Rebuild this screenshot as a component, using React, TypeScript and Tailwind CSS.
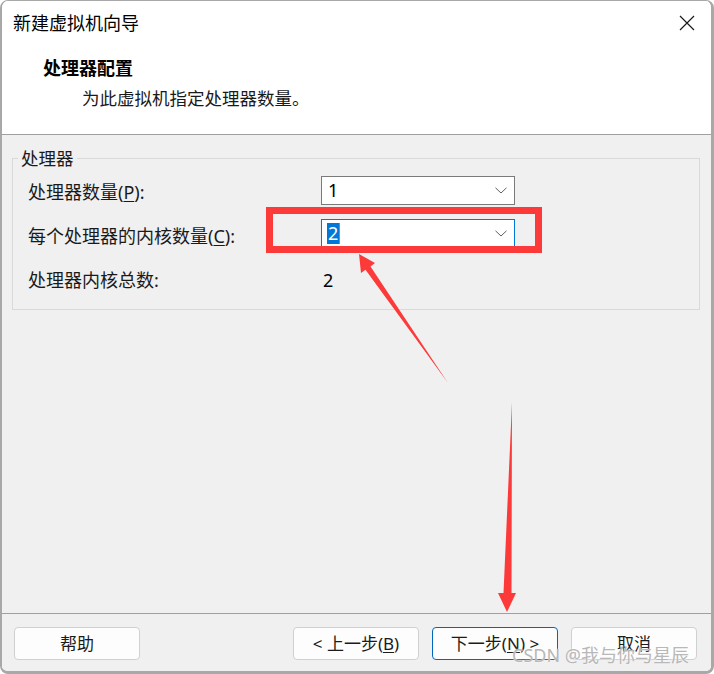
import React from 'react';

const FONT = "font-['Noto_Sans','Noto_Sans_CJK_SC',sans-serif]";

const Chevron = () => (
  <svg width="12" height="7" viewBox="0 0 12 7" className="shrink-0">
    <path d="M0.5 0.8 L6 6 L11.5 0.8" fill="none" stroke="#606060" strokeWidth="1" />
  </svg>
);

const Combo = ({ value, focused }: { value: string; focused?: boolean }) => (
  <div
    className={`h-[29px] w-[194px] bg-white border flex items-center justify-between pl-[5px] pr-[7px] ${
      focused ? 'border-[#0078d7]' : 'border-[#7a7a7a]'
    }`}
  >
    {focused ? (
      <span className="flex items-center">
        <span className="bg-[#0078d7] text-white text-[18px] leading-[21px] px-[1px]">{value}</span>
        <span className="w-[1px] h-[21px] bg-[#d07a2a]" />
      </span>
    ) : (
      <span className="text-[18px] leading-[21px] text-black pl-[1px]">{value}</span>
    )}
    <Chevron />
  </div>
);

const Btn = ({ children, primary }: { children: React.ReactNode; primary?: boolean }) => (
  <button
    className={`w-[126px] h-[33px] rounded-[4px] border bg-[#fdfdfd] text-[17px] leading-[22px] text-[#1b1b1b] flex items-center justify-center ${
      primary ? 'border-[#0067c0]' : 'border-[#d0d0d0]'
    }`}
  >
    {children}
  </button>
);

const App: React.FC = () => {
  return (
    <div className={`relative w-[714px] h-[674px] bg-white overflow-hidden ${FONT}`}>
      <div className="h-full flex flex-col rounded-[8px] border-t border-l-2 border-r-[3px] border-b-[3px] border-[#a8a8a8] overflow-hidden">
        {/* Header */}
        <div className="h-[134px] shrink-0 bg-white border-b border-[#a0a0a0]">
          <div className="h-[44px] flex items-center justify-between pl-[11px] pr-[16px]">
            <span className="text-[18px] leading-[24px] text-black">新建虚拟机向导</span>
            <svg width="16" height="16" viewBox="0 0 16 16">
              <path d="M1 1 L15 15 M15 1 L1 15" stroke="#1a1a1a" strokeWidth="1.2" />
            </svg>
          </div>
          <div className="mt-[11px] pl-[41px] text-[18px] leading-[24px] font-bold text-black">处理器配置</div>
          <div className="mt-[6px] pl-[80px] text-[17.5px] leading-[24px] text-[#1a1a1a]">为此虚拟机指定处理器数量。</div>
        </div>

        {/* Content */}
        <div className="flex-1 bg-[#f0f0f0] pt-[12px]">
          <fieldset className="ml-[10px] mr-[11px] border border-[#d9d9d9]">
            <legend className="ml-[5px] px-[3px] text-[17.5px] leading-[22px] text-[#1a1a1a]">处理器</legend>
            <div className="pl-[15px] pt-[7px] pb-[17px] flex flex-col text-[18px] text-[#1a1a1a]">
              <div className="flex items-center">
                <span className="w-[293px] leading-[24px] pt-[3px]">
                  处理器数量(<span className="underline underline-offset-2">P</span>):
                </span>
                <Combo value="1" />
              </div>
              <div className="flex items-center mt-[14px]">
                <span className="w-[293px] leading-[24px] pt-[5px]">
                  每个处理器的内核数量(<span className="underline underline-offset-2">C</span>):
                </span>
                <Combo value="2" focused />
              </div>
              <div className="flex items-center mt-[20px]">
                <span className="w-[293px] leading-[24px]">处理器内核总数:</span>
                <span className="pl-[2px] text-[18px] leading-[24px] text-black">2</span>
              </div>
            </div>
          </fieldset>
        </div>

        {/* Footer */}
        <div className="h-[58px] shrink-0 bg-[#f0f0f0] border-t border-[#a0a0a0] pt-[13px] pl-[12px] pr-[14px] flex items-start">
          <Btn>帮助</Btn>
          <div className="flex-1" />
          <div className="flex gap-[13px]">
            <Btn>
              &lt; 上一步(<span className="underline underline-offset-2">B</span>)
            </Btn>
            <Btn primary>
              下一步(<span className="underline underline-offset-2">N</span>) &gt;
            </Btn>
            <Btn>取消</Btn>
          </div>
        </div>
      </div>

      {/* Watermark */}
      <div className="absolute left-[512px] top-[643px] text-[18px] leading-[24px] text-[#b8b8b8] whitespace-nowrap pointer-events-none [text-shadow:0_0_2px_#ffffff]">
        CSDN @我与你与星辰
      </div>

      {/* Red annotations */}
      <svg className="absolute left-0 top-0 pointer-events-none" width="714" height="674" viewBox="0 0 714 674">
        <rect x="269.5" y="210.5" width="269" height="39" fill="none" stroke="#fc3a3a" strokeWidth="7" />
        <polygon
          points="359,254 375,263 370.5,266.5 448,383 365.5,269.7 361,273"
          fill="#fc3a3a"
        />
        <polygon
          points="512,402 511.5,593 516,593 507,612 498,593 503.5,593"
          fill="#fc3a3a"
        />
      </svg>
    </div>
  );
};

export default App;
